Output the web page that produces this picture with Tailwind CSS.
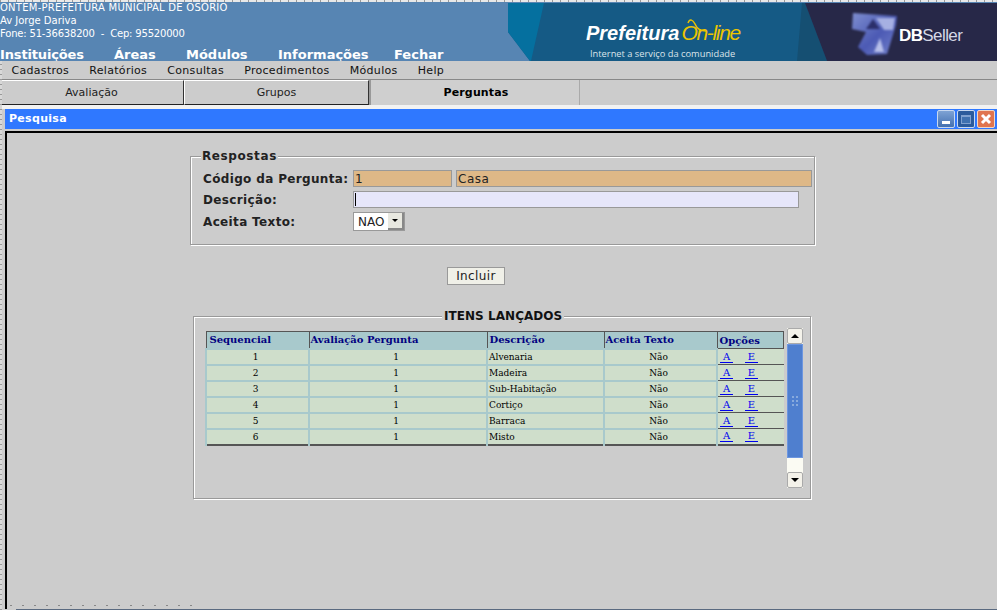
<!DOCTYPE html>
<html lang="pt">
<head>
<meta charset="UTF-8">
<title>Pesquisa</title>
<script src="https://cdn.jsdelivr.net/npm/@tailwindcss/browser@4"></script>
</head>
<body class="relative w-[997px] h-[610px] overflow-hidden bg-[#cccccc] font-['DejaVu_Sans',sans-serif]">

<!-- Header -->
<header class="flex h-[61px] bg-[#5785b3] text-white">
  <div class="w-[508px] shrink-0 overflow-hidden whitespace-nowrap">
    <div class="pt-px text-[10px] leading-[13px]">
      <p class="tracking-[0.25px]">ONTEM-PREFEITURA MUNICIPAL DE OSÓRIO</p>
      <p class="tracking-[-0.02px]">Av Jorge Dariva</p>
      <p class="tracking-[-0.18px]">Fone: 51-36638200 &nbsp;-&nbsp; Cep: 95520000</p>
    </div>
    <nav class="mt-[7px] flex text-[13px] leading-[15px] font-bold">
      <span class="w-[114px] tracking-[-0.15px]">Instituições</span>
      <span class="w-[72px]">Áreas</span>
      <span class="w-[92px]">Módulos</span>
      <span class="w-[116px]">Informações</span>
      <span>Fechar</span>
    </nav>
  </div>
  <div class="relative flex-1 overflow-hidden bg-[#155a85]">
    <svg class="absolute inset-0" width="489" height="61" viewBox="0 0 489 61">
      <defs>
        <linearGradient id="dbg" x1="0" y1="0" x2="1" y2="1">
          <stop offset="0" stop-color="#7f8fd0"/>
          <stop offset="0.55" stop-color="#4c5ab4"/>
          <stop offset="1" stop-color="#7483cc"/>
        </linearGradient>
      </defs>
      <rect width="489" height="3" fill="#5785b3"/>
      <polygon points="0,32 22,61 0,61" fill="#5785b3"/>
      <polygon points="0,3 36,3 23,61 22,61 0,32" fill="#05709f"/>
      <polygon points="294,3 297,3 319,61 289,61" fill="#154f72"/>
      <polygon points="297,3 489,3 489,61 319,61" fill="#272848"/>
      <path d="M180 23 C182 18 185 20 187 24 C189 29 192 31 198 31" fill="none" stroke="#ecc400" stroke-width="1.5"/>
      <g class="blur-[1px]">
        <path d="M345 13 L389 16 L388 25 L379 54 L359 55 L350 47 L358 32 L344 29 Z" fill="url(#dbg)"/>
        <path d="M358 29 L365 19 L372 29 Z" fill="#2b2f6a"/>
        <path d="M366 52 L372 38 L376 52 Z" fill="#b8c0ea"/>
        <path d="M368 18 L387 18 L385 30 L376 30 Z" fill="#a6b0e2"/>
      </g>
    </svg>
    <div class="absolute left-[78px] top-[21px] flex items-baseline font-['Liberation_Sans',sans-serif] italic whitespace-nowrap">
      <span class="text-[20px] leading-[24px] font-bold">Prefeitura</span>
      <span class="ml-[2px] text-[21px] leading-[24px] tracking-[-1.3px] text-[#ecc400]">On-line</span>
    </div>
    <p class="absolute left-[82px] top-[48px] font-['Open_Sans',sans-serif] text-[9.3px] leading-[12px] text-[#dbe4ea] whitespace-nowrap">Internet a serviço da comunidade</p>
    <p class="absolute left-[391px] top-[26px] text-[17px] leading-[20px] tracking-[-0.6px] font-['Liberation_Sans',sans-serif] text-[#d5d8e6] whitespace-nowrap"><b class="text-white">DB</b>Seller</p>
  </div>
</header>

<!-- Menu -->
<nav class="flex h-[18px] gap-[20.2px] bg-[#cccccc] pl-[11.5px] text-[11px] leading-[20px] tracking-[0.3px] text-[#111]">
  <span>Cadastros</span>
  <span>Relatórios</span>
  <span>Consultas</span>
  <span>Procedimentos</span>
  <span>Módulos</span>
  <span>Help</span>
</nav>

<!-- Tabs -->
<div class="flex h-[26px] border-t border-[#888] text-[11px] text-[#222]">
  <div class="flex w-[184px] items-center justify-center border-t border-r border-b border-t-white border-r-[#333] border-b-[#222] pt-px">Avaliação</div>
  <div class="flex w-[185px] items-center justify-center border-t border-r border-b border-l border-t-white border-r-[#333] border-b-[#222] border-l-white pt-px">Grupos</div>
  <div class="flex w-[211px] items-center justify-center border-r border-l-2 border-l-[#999] border-r-[#aaa] bg-[#cfcfcf] pt-[2px] pl-[2px] font-bold tracking-[0.15px] text-black">Perguntas</div>
</div>
<div class="h-[4px] bg-[#f2f2f2]"></div>

<!-- Window -->
<section class="ml-[5px]">
  <div class="flex h-[20px] items-center justify-between bg-[#2f78ff] pr-[2px] pl-[4px]">
    <h1 class="text-[11px] font-bold tracking-[0.3px] text-white">Pesquisa</h1>
    <div class="flex gap-[2px]">
      <span class="flex h-[18px] w-[18px] items-end justify-center rounded-[2px] border border-[#c8d8f0] bg-linear-to-b from-[#7ea2d4] to-[#4470b0] pb-[3px]"><span class="h-[3px] w-[8px] bg-white"></span></span>
      <span class="flex h-[18px] w-[18px] items-center justify-center rounded-[2px] border border-[#c8d8f0] bg-[#2b5a9c]"><span class="h-[9px] w-[10px] border border-t-2 border-[#7fa0d0] bg-[#3f70b0]"></span></span>
      <span class="flex h-[18px] w-[18px] items-center justify-center rounded-[2px] border border-[#f0d8c8] bg-[#e0754f]">
        <svg width="12" height="12" viewBox="0 0 12 12"><path d="M2 2 L10 10 M10 2 L2 10" stroke="#fff" stroke-width="3"/></svg>
      </span>
    </div>
  </div>
  <div class="h-[2px] bg-[#cccccc]"></div>

  <div class="h-[478px] border-t-2 border-l-2 border-black">
    <!-- Respostas -->
    <fieldset class="mt-[16px] ml-[183px] h-[96px] w-[625px] border border-[#999] pl-[12px] shadow-[inset_1px_1px_0_#fff,1px_1px_0_#fff]">
      <legend class="relative -ml-[2px] bg-[#cccccc] px-[1px] text-[12px] leading-[14px] font-bold tracking-[0.6px] text-[#222]">Respostas</legend>
      <div class="mt-[7px] flex flex-col gap-[4px] text-[12px] font-bold tracking-[0.35px] text-[#222]">
        <div class="flex h-[17px] items-center">
          <label class="w-[150px] whitespace-nowrap">Código da Pergunta:</label>
          <input readonly value="1" class="h-[17px] w-[99px] border border-[#999] bg-[#deb887] px-[1px] pt-px text-[12px] font-normal tracking-[0.5px] outline-none">
          <input readonly value="Casa" class="ml-[4px] h-[17px] w-[356px] border border-[#999] bg-[#deb887] px-[1px] pt-px text-[12px] font-normal tracking-[0.5px] outline-none">
        </div>
        <div class="flex h-[17px] items-center">
          <label class="w-[150px]">Descrição:</label>
          <div class="flex h-[17px] w-[446px] items-center border border-[#999] bg-[#e6e6fa] pl-[1px]"><span class="h-[13px] w-px bg-black"></span></div>
        </div>
        <div class="flex h-[19px] items-center">
          <label class="w-[150px]">Aceita Texto:</label>
          <div class="flex h-[19px] w-[52px] items-center justify-between border border-[#999] bg-white pl-[4px] text-[12px] font-normal tracking-normal">
            NAO
            <span class="flex h-[17px] w-[16px] items-center justify-center border-r-2 border-b-2 border-[#888] bg-[#e8e8e0]">
              <span class="h-0 w-0 border-x-[3px] border-t-[3px] border-x-transparent border-t-black"></span>
            </span>
          </div>
        </div>
      </div>
    </fieldset>

    <div class="mt-[18px] ml-[440px]">
      <button class="h-[18px] w-[58px] border border-[#999] bg-[#f0f0e8] text-[12px] leading-[16px] tracking-[0.4px] text-[#222]">Incluir</button>
    </div>

    <!-- Itens lançados -->
    <fieldset class="mt-[22px] ml-[186px] h-[190px] w-[618px] border border-[#999] pl-[11px] shadow-[inset_1px_1px_0_#fff,1px_1px_0_#fff]">
      <legend class="relative ml-[237px] bg-[#cccccc] px-[2px] text-[12px] leading-[14px] font-bold tracking-[0.05px] text-[#111]">ITENS LANÇADOS</legend>
      <div class="flex items-start">
        <table class="mt-[8px] w-[579px] table-fixed border-collapse font-['DejaVu_Serif',serif] text-[9px] leading-[14px] text-black">
          <thead class="text-[10px] leading-[15px] font-bold text-[#000080]">
            <tr class="h-[17px] bg-[#a8c9cc]">
              <th class="w-[103px] border-t border-l border-[#555] pl-[3px] text-left">Sequencial</th>
              <th class="w-[178px] border-t border-l border-[#555] pl-[1px] text-left">Avaliação Pergunta</th>
              <th class="w-[117px] border-t border-l border-[#555] pl-[2px] text-left">Descrição</th>
              <th class="w-[113px] border-t border-l border-[#555] pl-[1px] text-left">Aceita Texto</th>
              <th class="border-t border-r border-l border-[#555] pl-[2px] text-left">Opções</th>
            </tr>
          </thead>
          <tbody>
            <tr class="h-[16px] bg-[#cfdecb] text-center">
              <td class="border-2 border-[#a8c9cc] pr-[4px]">1</td><td class="border-2 border-[#a8c9cc] pr-[4px]">1</td><td class="border-2 border-[#a8c9cc] pl-px text-left">Alvenaria</td><td class="border-2 border-[#a8c9cc] pr-[4px]">Não</td>
              <td class="border-t border-l border-[#555] pl-[2px] text-left text-[10px] text-[#0000ee]"><a class="inline-block w-[13px] border-b border-[#0000ee] text-center leading-[11px]">A</a><a class="ml-[12px] inline-block w-[13px] border-b border-[#0000ee] text-center leading-[11px]">E</a></td>
            </tr>
            <tr class="h-[16px] bg-[#cfdecb] text-center">
              <td class="border-2 border-[#a8c9cc] pr-[4px]">2</td><td class="border-2 border-[#a8c9cc] pr-[4px]">1</td><td class="border-2 border-[#a8c9cc] pl-px text-left">Madeira</td><td class="border-2 border-[#a8c9cc] pr-[4px]">Não</td>
              <td class="border-t border-l border-[#555] pl-[2px] text-left text-[10px] text-[#0000ee]"><a class="inline-block w-[13px] border-b border-[#0000ee] text-center leading-[11px]">A</a><a class="ml-[12px] inline-block w-[13px] border-b border-[#0000ee] text-center leading-[11px]">E</a></td>
            </tr>
            <tr class="h-[16px] bg-[#cfdecb] text-center">
              <td class="border-2 border-[#a8c9cc] pr-[4px]">3</td><td class="border-2 border-[#a8c9cc] pr-[4px]">1</td><td class="border-2 border-[#a8c9cc] pl-px text-left">Sub-Habitação</td><td class="border-2 border-[#a8c9cc] pr-[4px]">Não</td>
              <td class="border-t border-l border-[#555] pl-[2px] text-left text-[10px] text-[#0000ee]"><a class="inline-block w-[13px] border-b border-[#0000ee] text-center leading-[11px]">A</a><a class="ml-[12px] inline-block w-[13px] border-b border-[#0000ee] text-center leading-[11px]">E</a></td>
            </tr>
            <tr class="h-[16px] bg-[#cfdecb] text-center">
              <td class="border-2 border-[#a8c9cc] pr-[4px]">4</td><td class="border-2 border-[#a8c9cc] pr-[4px]">1</td><td class="border-2 border-[#a8c9cc] pl-px text-left">Cortiço</td><td class="border-2 border-[#a8c9cc] pr-[4px]">Não</td>
              <td class="border-t border-l border-[#555] pl-[2px] text-left text-[10px] text-[#0000ee]"><a class="inline-block w-[13px] border-b border-[#0000ee] text-center leading-[11px]">A</a><a class="ml-[12px] inline-block w-[13px] border-b border-[#0000ee] text-center leading-[11px]">E</a></td>
            </tr>
            <tr class="h-[16px] bg-[#cfdecb] text-center">
              <td class="border-2 border-[#a8c9cc] pr-[4px]">5</td><td class="border-2 border-[#a8c9cc] pr-[4px]">1</td><td class="border-2 border-[#a8c9cc] pl-px text-left">Barraca</td><td class="border-2 border-[#a8c9cc] pr-[4px]">Não</td>
              <td class="border-t border-l border-[#555] pl-[2px] text-left text-[10px] text-[#0000ee]"><a class="inline-block w-[13px] border-b border-[#0000ee] text-center leading-[11px]">A</a><a class="ml-[12px] inline-block w-[13px] border-b border-[#0000ee] text-center leading-[11px]">E</a></td>
            </tr>
            <tr class="h-[16px] border-b-2 border-[#555] bg-[#cfdecb] text-center">
              <td class="border-x-2 border-t-2 border-x-[#a8c9cc] border-t-[#a8c9cc] pr-[4px]">6</td><td class="border-x-2 border-t-2 border-x-[#a8c9cc] border-t-[#a8c9cc] pr-[4px]">1</td><td class="border-x-2 border-t-2 border-x-[#a8c9cc] border-t-[#a8c9cc] pl-px text-left">Misto</td><td class="border-x-2 border-t-2 border-x-[#a8c9cc] border-t-[#a8c9cc] pr-[4px]">Não</td>
              <td class="border-t border-l border-[#555] pl-[2px] text-left text-[10px] text-[#0000ee]"><a class="inline-block w-[13px] border-b border-[#0000ee] text-center leading-[11px]">A</a><a class="ml-[12px] inline-block w-[13px] border-b border-[#0000ee] text-center leading-[11px]">E</a></td>
            </tr>
          </tbody>
        </table>
        <!-- Scrollbar -->
        <div class="mt-[5px] ml-[3px] flex h-[160px] w-[16px] shrink-0 flex-col bg-[#fbfbf3]">
          <span class="flex h-[16px] items-center justify-center rounded-[2px] border border-[#aaa] bg-[#f4f2ea]"><span class="h-0 w-0 border-x-[4px] border-b-[4px] border-x-transparent border-b-black"></span></span>
          <span class="flex h-[114px] items-center justify-center border border-[#6d96e0] bg-[#4f7fcf]">
            <span class="grid grid-cols-2 gap-[2px]">
              <i class="h-[2px] w-[2px] bg-[#88aadd]"></i><i class="h-[2px] w-[2px] bg-[#88aadd]"></i>
              <i class="h-[2px] w-[2px] bg-[#88aadd]"></i><i class="h-[2px] w-[2px] bg-[#88aadd]"></i>
              <i class="h-[2px] w-[2px] bg-[#88aadd]"></i><i class="h-[2px] w-[2px] bg-[#88aadd]"></i>
            </span>
          </span>
          <span class="flex-1"></span>
          <span class="flex h-[16px] items-center justify-center rounded-[2px] border border-[#aaa] bg-[#f4f2ea]"><span class="h-0 w-0 border-x-[4px] border-t-[4px] border-x-transparent border-t-black"></span></span>
        </div>
      </div>
    </fieldset>
  </div>
</section>

<!-- Dotted desktop texture -->
<div class="absolute top-0 left-0 h-[2px] w-[997px] bg-[repeating-linear-gradient(90deg,#999_0,#999_1px,#e8e8e8_1px,#e8e8e8_8px)]"></div>
<div class="absolute top-[61px] left-0 h-[549px] w-[2px] bg-[repeating-linear-gradient(0deg,#999_0,#999_1px,#d8d8d8_1px,#d8d8d8_5px)]"></div>
<div class="absolute bottom-[4px] left-[10px] h-px w-[190px] bg-[repeating-linear-gradient(90deg,#888_0,#888_2px,transparent_2px,transparent_12px)]"></div>
<div class="absolute bottom-0 left-[16px] h-px w-[981px] bg-[#5a6a80]"></div>
</body>
</html>
